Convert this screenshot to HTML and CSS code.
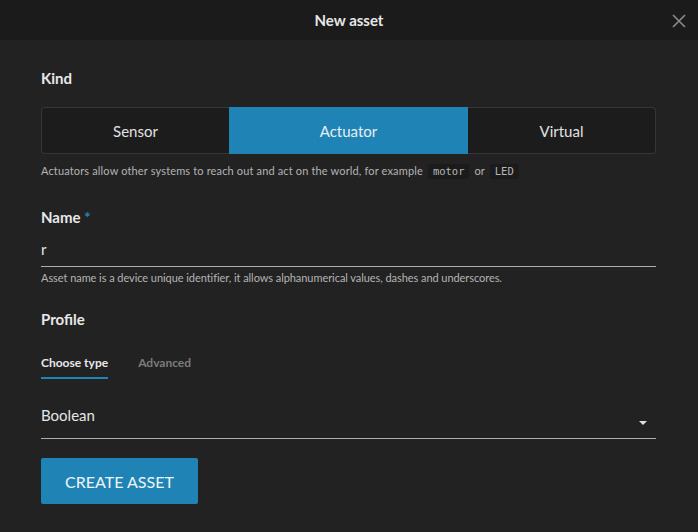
FILE: index.html
```html
<!DOCTYPE html>
<html>
<head>
<meta charset="utf-8">
<link rel="stylesheet" href="styles.css">
</head>
<body>
<div class="dialog">
  <header class="header">
    <span class="title">New asset</span>
    <button class="close" aria-label="Close">
      <svg width="14" height="14" viewBox="0 0 14 14"><path d="M1 1L13 13M13 1L1 13" stroke="#8c8c8c" stroke-width="1.6" fill="none"/></svg>
    </button>
  </header>
  <main class="content">
    <div class="label label-kind">Kind</div>
    <div class="segments">
      <div class="seg">Sensor</div>
      <div class="seg active">Actuator</div>
      <div class="seg">Virtual</div>
    </div>
    <div class="help help-kind">Actuators allow other systems to reach out and act on the world, for example <code class="chip">motor</code> or <code class="chip">LED</code></div>

    <div class="label label-name">Name <span class="req">*</span></div>
    <div class="input">r</div>
    <div class="help help-name">Asset name is a device unique identifier, it allows alphanumerical values, dashes and underscores.</div>

    <div class="label label-profile">Profile</div>
    <div class="tabs">
      <div class="tab active">Choose type</div>
      <div class="tab">Advanced</div>
    </div>
    <div class="select">
      <span class="select-value">Boolean</span>
      <span class="arrow"></span>
    </div>
    <button class="btn">CREATE ASSET</button>
  </main>
</div>
</body>
</html>
```
FILE: styles.css
```css
html, body {
  margin: 0;
  padding: 0;
  background: #222222;
  font-family: Lato, "Open Sans", sans-serif;
  color: #e6e6e6;
}
.dialog {
  width: 698px;
  height: 532px;
  background: #222222;
}
.header {
  height: 40px;
  background: #1b1b1b;
  display: flex;
  align-items: center;
  justify-content: center;
  position: relative;
}
.title {
  font-size: 15px;
  font-weight: 700;
  color: #e8e8e8;
}
.close {
  position: absolute;
  right: 12px;
  top: 14px;
  width: 14px;
  height: 14px;
  padding: 0;
  border: 0;
  background: none;
  display: block;
}
.close svg { display: block; }
.content {
  padding: 0 42px 0 41px;
  display: flex;
  flex-direction: column;
  align-items: stretch;
}
.label {
  font-size: 15px;
  font-weight: 700;
  line-height: 20px;
  color: #e8e8e8;
}
.label-kind { margin-top: 28px; }
.label-name { margin-top: 28px; }
.label-profile { margin-top: 24px; }
.req { color: #2387bb; }
.segments {
  margin-top: 19px;
  display: grid;
  grid-template-columns: 188px 239px 1fr;
  height: 47px;
}
.seg {
  display: flex;
  align-items: center;
  justify-content: center;
  background: #1c1c1c;
  border: 1px solid #363636;
  font-size: 15px;
  color: #e2e2e2;
}
.seg:first-child {
  border-radius: 4px 0 0 4px;
  border-right: 0;
}
.seg:last-child {
  border-radius: 0 4px 4px 0;
  border-left: 0;
}
.seg.active {
  background: #1f84b5;
  border-color: #1f84b5;
  color: #e8eef2;
}
.help {
  font-size: 11px;
  line-height: 16px;
  color: #b4b4b4;
}
.help-kind { margin-top: 9px; letter-spacing: 0.15px; }
.help-name { margin-top: 4px; line-height: 14px; letter-spacing: -0.06px; }
.chip {
  font-family: "DejaVu Sans Mono", "Liberation Mono", monospace;
  font-size: 10.5px;
  letter-spacing: 0;
  background: #1b1b1b;
  color: #b8b8b8;
  padding: 1px 5px 2px;
  margin: 0 2px;
  border-radius: 2px;
}
.input {
  padding: 12px 0 7px;
  line-height: 20px;
  font-size: 15px;
  color: #e6e6e6;
  border-bottom: 1px solid #a9b0b5;
}
.tabs {
  display: flex;
  gap: 30px;
}
.tab {
  font-size: 12px;
  font-weight: 700;
  line-height: 16px;
  padding: 26px 0 6px;
  color: #7c7c7c;
  border-bottom: 2px solid transparent;
}
.tab.active {
  color: #e8e8e8;
  border-bottom-color: #1f84b5;
}
.select {
  display: flex;
  align-items: flex-start;
  justify-content: space-between;
  padding: 26px 0 13px;
  border-bottom: 1px solid #a9b0b5;
  position: relative;
}
.select-value {
  font-size: 15px;
  line-height: 20px;
  color: #e6e6e6;
}
.arrow {
  width: 0;
  height: 0;
  border-left: 4px solid transparent;
  border-right: 4px solid transparent;
  border-top: 4px solid #e0e0e0;
  margin-top: 16px;
  margin-right: 9px;
}
.btn {
  align-self: flex-start;
  margin-top: 19px;
  width: 157px;
  height: 46px;
  background: #1f84b5;
  border: 0;
  border-radius: 2px;
  color: #f0f4f7;
  font-family: Lato, "Open Sans", sans-serif;
  font-size: 16px;
  padding: 0;
}
```
